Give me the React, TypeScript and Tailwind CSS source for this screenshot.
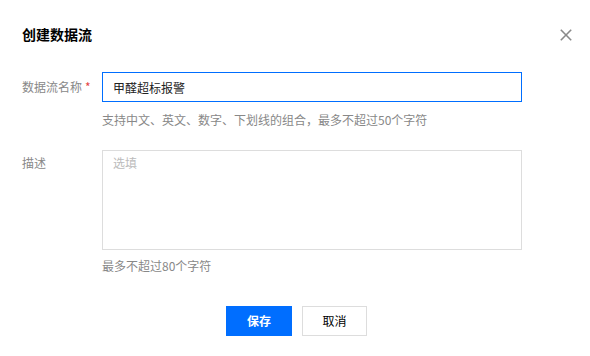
export default function App() {
  return (
    <div className="w-[590px] h-[356px] bg-white font-['Noto_Sans_CJK_SC',sans-serif] text-black">
      {/* header */}
      <div className="flex items-start justify-between pl-[22px] pr-[18px] pt-[24px]">
        <h2 className="text-[14px] leading-[20px] font-bold">创建数据流</h2>
        <button className="mt-[5px] w-[12px] h-[12px]" aria-label="关闭">
          <svg width="12" height="12" viewBox="0 0 12 12" fill="none" stroke="#8a8a8a" strokeWidth="1.6">
            <line x1="0.8" y1="0.8" x2="11.2" y2="11.2" />
            <line x1="11.2" y1="0.8" x2="0.8" y2="11.2" />
          </svg>
        </button>
      </div>

      {/* form */}
      <div className="pl-[22px] mt-[28px]">
        <div className="flex">
          <label className="w-[80px] text-xs leading-[30px] text-[#888]">
            数据流名称<span className="text-[#e54545] ml-[3px]">*</span>
          </label>
          <input
            readOnly
            value="甲醛超标报警"
            className="w-[420px] h-[30px] border border-[#006eff] px-[10px] text-xs text-[#222] outline-none"
          />
        </div>
        <p className="ml-[80px] mt-[8px] text-xs leading-[20px] text-[#888]">
          支持中文、英文、数字、下划线的组合，最多不超过50个字符
        </p>

        <div className="flex mt-[20px]">
          <label className="w-[80px] text-xs leading-[26px] text-[#888]">描述</label>
          <textarea
            readOnly
            placeholder="选填"
            className="w-[420px] h-[100px] border border-[#ddd] px-[10px] py-[4px] text-xs leading-[16px] resize-none outline-none placeholder:text-[#bbb]"
          />
        </div>
        <p className="ml-[80px] mt-[6px] text-xs leading-[20px] text-[#888]">最多不超过80个字符</p>
      </div>

      {/* footer */}
      <div className="flex justify-center gap-[10px] pl-[3px] mt-[30px]">
        <button className="w-[66px] h-[30px] bg-[#006eff] text-white text-xs font-bold">保存</button>
        <button className="w-[65px] h-[30px] border border-[#ddd] bg-white text-xs text-black">取消</button>
      </div>
    </div>
  )
}
